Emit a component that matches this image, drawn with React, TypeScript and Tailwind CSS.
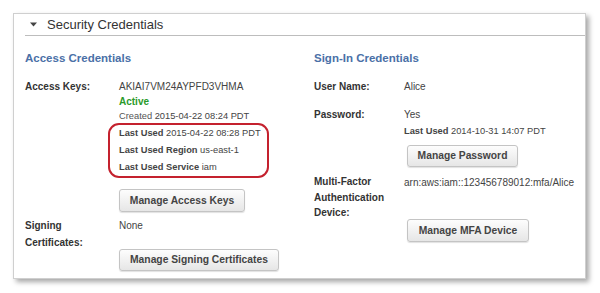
import React from 'react';

const Btn: React.FC<{ label: string; className?: string }> = ({ label, className = '' }) => (
  <button
    className={`block whitespace-nowrap px-[8px] rounded-[3px] border border-[#c4c4c4] bg-gradient-to-b from-[#fdfdfd] to-[#e6e6e6] text-[10.3px] font-bold text-[#444] shadow-[0_1px_1px_rgba(0,0,0,0.12)] ${className}`}
  >
    {label}
  </button>
);

const Label: React.FC<{ children: React.ReactNode; w: string; leading?: string }> = ({ children, w, leading = 'leading-[15px]' }) => (
  <div className={`${w} shrink-0 whitespace-nowrap font-bold text-[10px] text-[#333] ${leading}`}>{children}</div>
);

export default function App() {
  return (
    <div className="w-[600px] h-[293px] bg-white pt-[13px] pl-[13px] font-['Liberation_Sans',Arial,sans-serif] overflow-hidden">
      <div className="w-[573px] h-[266px] border border-[#cfcfcf] bg-white shadow-[3px_3px_5px_rgba(0,0,0,0.35)]">
        {/* section header */}
        <div className="ml-[11px] h-[22px] border-b border-[#bdbdbd] flex items-center">
          <svg width="7" height="5" viewBox="0 0 7 5" className="ml-[5px] mr-[10px]">
            <path d="M0 0.5 L7 0.5 L3.5 4.5 Z" fill="#444" />
          </svg>
          <span className="text-[13px] text-[#333] leading-[20px]">Security Credentials</span>
        </div>

        <div className="flex pl-[11px] pt-[14px]">
          {/* left column */}
          <div className="w-[289px] shrink-0">
            <div className="text-[11.5px] font-bold text-[#4a70a7] leading-[16px]">Access Credentials</div>
            <div className="flex mt-[13px]">
              <Label w="w-[94px]">Access Keys:</Label>
              <div className="text-[10px] text-[#444] whitespace-nowrap">
                <div className="leading-[15px]">AKIAI7VM24AYPFD3VHMA</div>
                <div className="leading-[15px] font-bold text-[#2a9a2a]">Active</div>
                <div className="leading-[15px] text-[9.3px]">
                  <span className="text-[#555]">Created</span> 2015-04-22 08:24 PDT
                </div>
                <div className="-mt-[1px] -ml-[11px] pl-[9px] w-[161px] border-2 border-[#c4212e] rounded-[11px] text-[9.3px]">
                  <div className="leading-[17px]">
                    <span className="font-bold text-[#444]">Last Used</span> 2015-04-22 08:28 PDT
                  </div>
                  <div className="leading-[17px]">
                    <span className="font-bold text-[#444]">Last Used Region</span> us-east-1
                  </div>
                  <div className="leading-[17px]">
                    <span className="font-bold text-[#444]">Last Used Service</span> iam
                  </div>
                </div>
                <Btn label="Manage Access Keys" className="mt-[11px] h-[23px] w-[126px]" />
              </div>
            </div>
            <div className="flex mt-[5px]">
              <Label w="w-[94px]" leading="leading-[17px]">
                Signing
                <br />
                Certificates:
              </Label>
              <div className="text-[10px] text-[#444]">
                <div className="leading-[17px]">None</div>
                <Btn label="Manage Signing Certificates" className="mt-[15px] h-[22px] w-[160px]" />
              </div>
            </div>
          </div>

          {/* right column */}
          <div className="flex-1">
            <div className="text-[11.5px] font-bold text-[#4a70a7] leading-[16px]">Sign-In Credentials</div>
            <div className="flex mt-[13px]">
              <Label w="w-[90px]">User Name:</Label>
              <div className="text-[10px] text-[#444] leading-[15px]">Alice</div>
            </div>
            <div className="flex mt-[13px]">
              <Label w="w-[90px]" leading="leading-[16px]">Password:</Label>
              <div className="text-[10px] text-[#444] whitespace-nowrap">
                <div className="leading-[16px]">Yes</div>
                <div className="leading-[16px] text-[9.3px]">
                  <span className="font-bold">Last Used</span> 2014-10-31 14:07 PDT
                </div>
                <Btn label="Manage Password" className="mt-[6px] ml-[3px] h-[22px] w-[111px]" />
              </div>
            </div>
            <div className="flex mt-[7px]">
              <Label w="w-[90px]" leading="leading-[15.5px]">
                Multi-Factor
                <br />
                Authentication
                <br />
                Device:
              </Label>
              <div className="text-[10px] text-[#444] whitespace-nowrap">
                <div className="leading-[16px] mt-[1px]">arn:aws:iam::123456789012:mfa/Alice</div>
                <Btn label="Manage MFA Device" className="mt-[28px] ml-[3px] h-[23px] w-[122px]" />
              </div>
            </div>
          </div>
        </div>
      </div>
    </div>
  );
}
